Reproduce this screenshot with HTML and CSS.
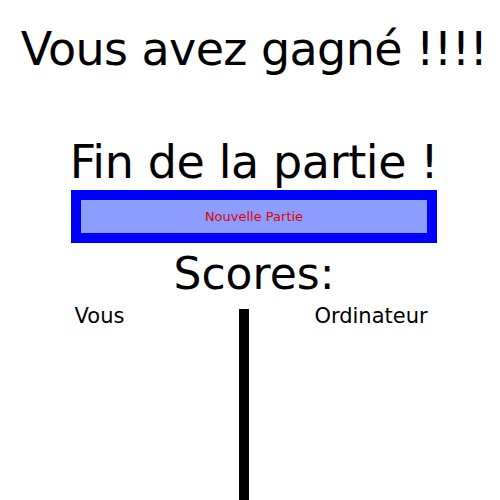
FILE: index.html
```html
<!DOCTYPE html>
<html lang="fr">
<head>
    <meta charset="UTF-8">
    <meta name="viewport" content="width=device-width, initial-scale=1.0">
    <title>Fin de la partie</title>

    <!-- styling -->
    <link rel="stylesheet" href="styles.css">
</head>
<body>
    <div class="game-over">
        <h1 id="result">Vous avez gagné !!!!</h1>

        <h2 id="end-title">Fin de la partie !</h2>

        <button type="button" id="new-game-btn">Nouvelle Partie</button>

        <h2 id="scores-title">Scores:</h2>

        <div class="scores">
            <div class="score-col player">Vous</div>
            <div class="divider"></div>
            <div class="score-col computer">Ordinateur</div>
        </div>
    </div>
</body>
</html>
```

FILE: styles.css
```css
body {
    margin: 0;
    font-family: "DejaVu Sans", sans-serif;
    color: #000000;
    background-color: #ffffff;
}

.game-over {
    display: flex;
    flex-direction: column;
    align-items: center;
    padding-left: 8px;
}

#result {
    font-size: 46px;
    font-weight: normal;
    line-height: 56px;
    letter-spacing: -0.6px;
    margin: 21px 0 57px;
}

#end-title {
    font-size: 46px;
    font-weight: normal;
    line-height: 56px;
    letter-spacing: -0.4px;
    margin: 0;
}

#new-game-btn {
    width: 366px;
    height: 53px;
    background-color: #8c9cff;
    border: 10px solid #0000ff;
    color: #e00000;
    font-family: inherit;
    font-size: 13px;
    padding: 0;
    cursor: pointer;
}

#scores-title {
    font-size: 44px;
    font-weight: normal;
    line-height: 52px;
    margin: 5px 0 0;
}

.scores {
    align-self: stretch;
    display: grid;
    grid-template-columns: 231px 10px 1fr;
    margin-top: 9px;
}

.score-col {
    font-size: 21px;
    line-height: 15px;
    text-align: center;
}

.player {
    padding-right: 48px;
}

.computer {
    padding-right: 7px;
}

.divider {
    height: 191px;
    background-color: #000000;
}
```
